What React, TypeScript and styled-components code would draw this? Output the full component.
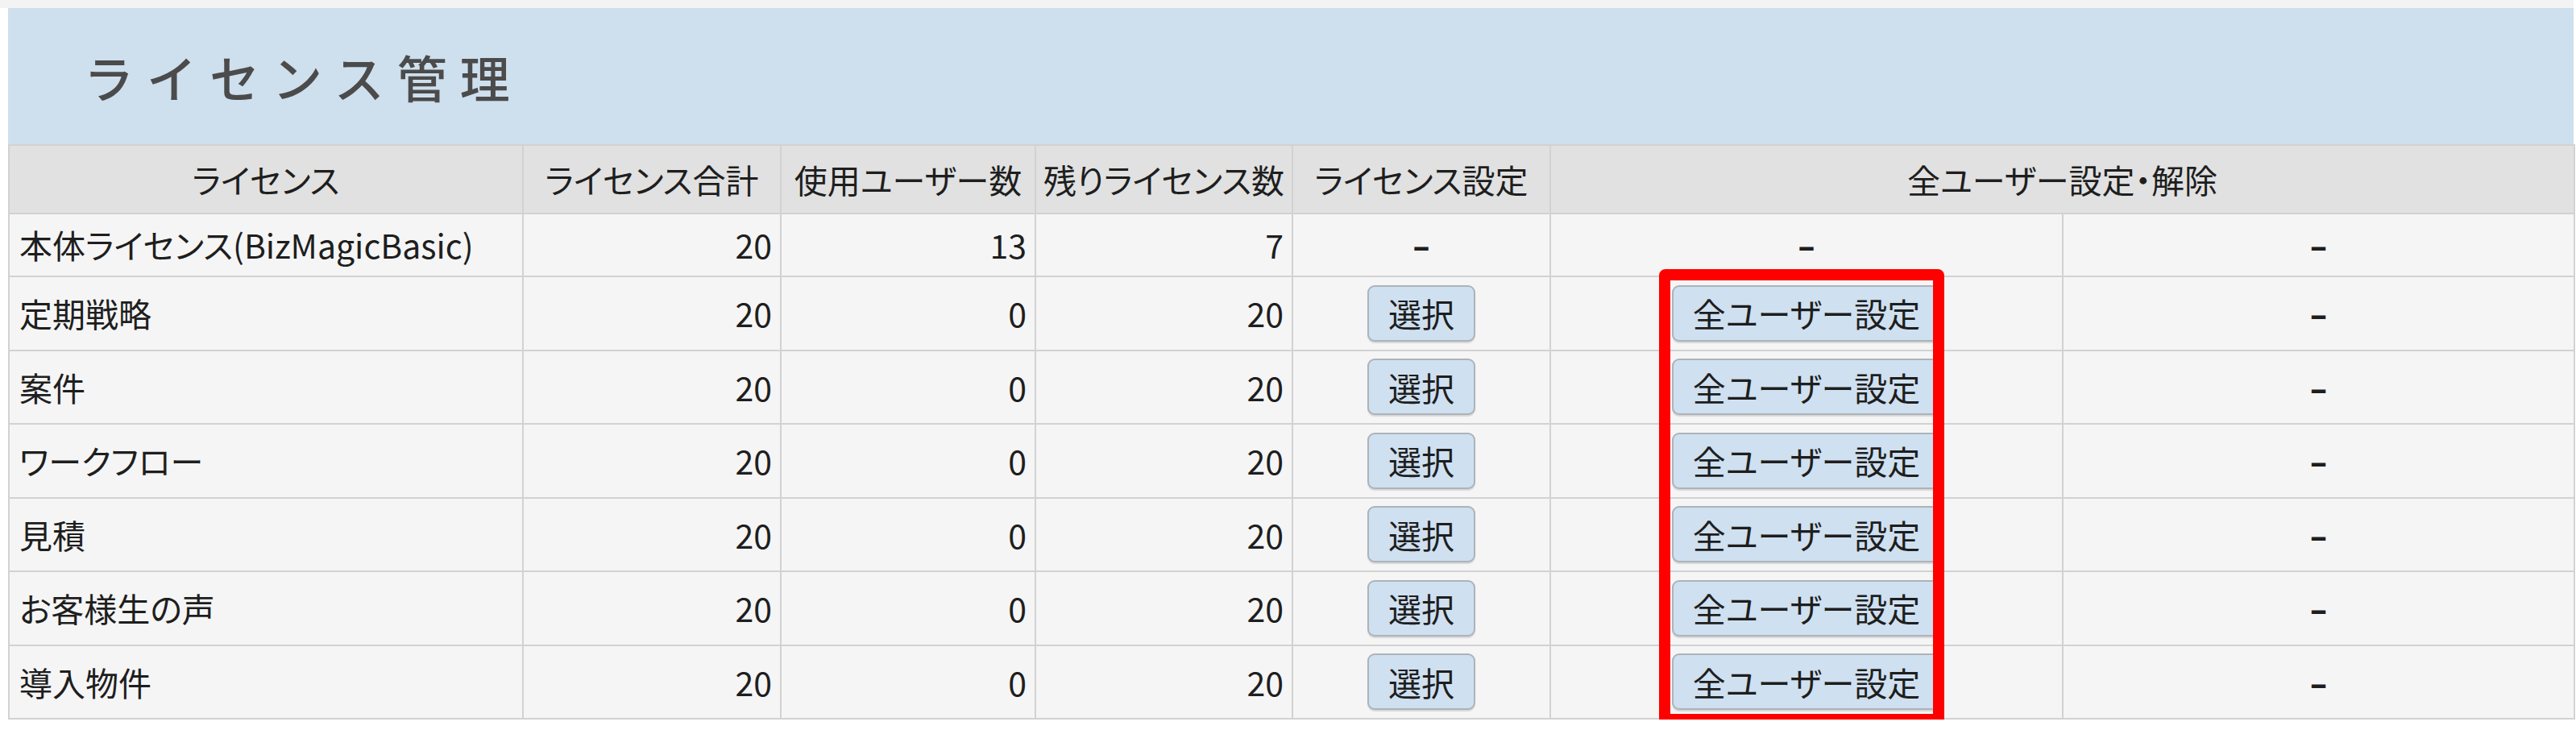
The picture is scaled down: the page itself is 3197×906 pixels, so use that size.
import React from "react";
import styled, { createGlobalStyle } from "styled-components";

const GlobalStyle = createGlobalStyle`
  html, body { margin: 0; padding: 0; background: #ffffff; }
  body {
    font-family: "Noto Sans CJK JP", "Noto Sans", sans-serif;
    color: #1e1e1e;
  }
`;

const Page = styled.div`
  border-top: 10px solid #f3f3f3;
  padding-left: 10px;
  width: 3184px;
`;

const TitleBar = styled.div`
  height: 169px;
  background: #cedfee;
  display: flex;
  align-items: center;
  padding-left: 94px;
  box-sizing: border-box;
`;

const Title = styled.h1`
  margin: 0;
  font-size: 62px;
  font-weight: 500;
  letter-spacing: 16px;
  color: #4b4b4b;
  line-height: 1;
`;

const TableWrap = styled.div`
  position: relative;
`;

const Table = styled.table`
  width: 3184px;
  table-layout: fixed;
  border-collapse: collapse;
  font-size: 41px;
  font-feature-settings: "palt";
  line-height: 1.2;
`;

const HeadCell = styled.th`
  background: #e1e1e1;
  border: 2px solid #d2d2d2;
  height: 83px;
  padding: 0;
  font-weight: 400;
  text-align: center;
  vertical-align: middle;
  color: #1e1e1e;
`;

const Cell = styled.td<{ $align: "left" | "right" | "center"; $tall?: boolean }>`
  background: #f5f5f5;
  border: 2px solid #d2d2d2;
  height: ${(p) => (p.$tall ? "89.5px" : "76px")};
  padding: ${(p) => (p.$align === "left" ? "0 0 0 12px" : p.$align === "right" ? "0 10px 0 0" : "0")};
  text-align: ${(p) => p.$align};
  vertical-align: middle;
  white-space: nowrap;
`;

const Dash = styled.span`
  font-family: "Noto Sans", sans-serif;
  font-weight: 700;
`;

const Button = styled.button`
  font-family: "Noto Sans CJK JP", "Noto Sans", sans-serif;
  font-feature-settings: "palt";
  font-size: 41px;
  color: #1e1e1e;
  height: 70px;
  padding: 0 24px;
  background: #cfe0f0;
  border: 2px solid #adb3ba;
  border-radius: 9px;
  box-shadow: 0 2px 1px rgba(0, 0, 0, 0.12);
  line-height: 1;
  cursor: pointer;
`;

const Highlight = styled.div`
  position: absolute;
  left: 2049px;
  top: 155px;
  width: 354px;
  height: 566px;
  box-sizing: border-box;
  border: 14px solid #ff0000;
  border-radius: 8px;
  pointer-events: none;
`;

type Row = {
  name: string;
  total: number;
  used: number;
  remaining: number;
  selectable: boolean;
};

const rows: Row[] = [
  { name: "本体ライセンス(BizMagicBasic)", total: 20, used: 13, remaining: 7, selectable: false },
  { name: "定期戦略", total: 20, used: 0, remaining: 20, selectable: true },
  { name: "案件", total: 20, used: 0, remaining: 20, selectable: true },
  { name: "ワークフロー", total: 20, used: 0, remaining: 20, selectable: true },
  { name: "見積", total: 20, used: 0, remaining: 20, selectable: true },
  { name: "お客様生の声", total: 20, used: 0, remaining: 20, selectable: true },
  { name: "導入物件", total: 20, used: 0, remaining: 20, selectable: true },
];

const widths = [638, 320, 316, 319, 320, 636, 635];

export default function App() {
  return (
    <>
      <GlobalStyle />
      <Page>
        <TitleBar>
          <Title>ライセンス管理</Title>
        </TitleBar>
        <TableWrap>
          <Table>
            <colgroup>
              {widths.map((w, i) => (
                <col key={i} style={{ width: w }} />
              ))}
            </colgroup>
            <thead>
              <tr>
                <HeadCell>ライセンス</HeadCell>
                <HeadCell>ライセンス合計</HeadCell>
                <HeadCell>使用ユーザー数</HeadCell>
                <HeadCell>残りライセンス数</HeadCell>
                <HeadCell>ライセンス設定</HeadCell>
                <HeadCell colSpan={2}>全ユーザー設定・解除</HeadCell>
              </tr>
            </thead>
            <tbody>
              {rows.map((r) => (
                <tr key={r.name}>
                  <Cell $align="left" $tall={r.selectable}>{r.name}</Cell>
                  <Cell $align="right" $tall={r.selectable}>{r.total}</Cell>
                  <Cell $align="right" $tall={r.selectable}>{r.used}</Cell>
                  <Cell $align="right" $tall={r.selectable}>{r.remaining}</Cell>
                  <Cell $align="center" $tall={r.selectable}>
                    {r.selectable ? <Button>選択</Button> : <Dash>–</Dash>}
                  </Cell>
                  <Cell $align="center" $tall={r.selectable}>
                    {r.selectable ? <Button>全ユーザー設定</Button> : <Dash>–</Dash>}
                  </Cell>
                  <Cell $align="center" $tall={r.selectable}>
                    <Dash>–</Dash>
                  </Cell>
                </tr>
              ))}
            </tbody>
          </Table>
          <Highlight />
        </TableWrap>
      </Page>
    </>
  );
}
